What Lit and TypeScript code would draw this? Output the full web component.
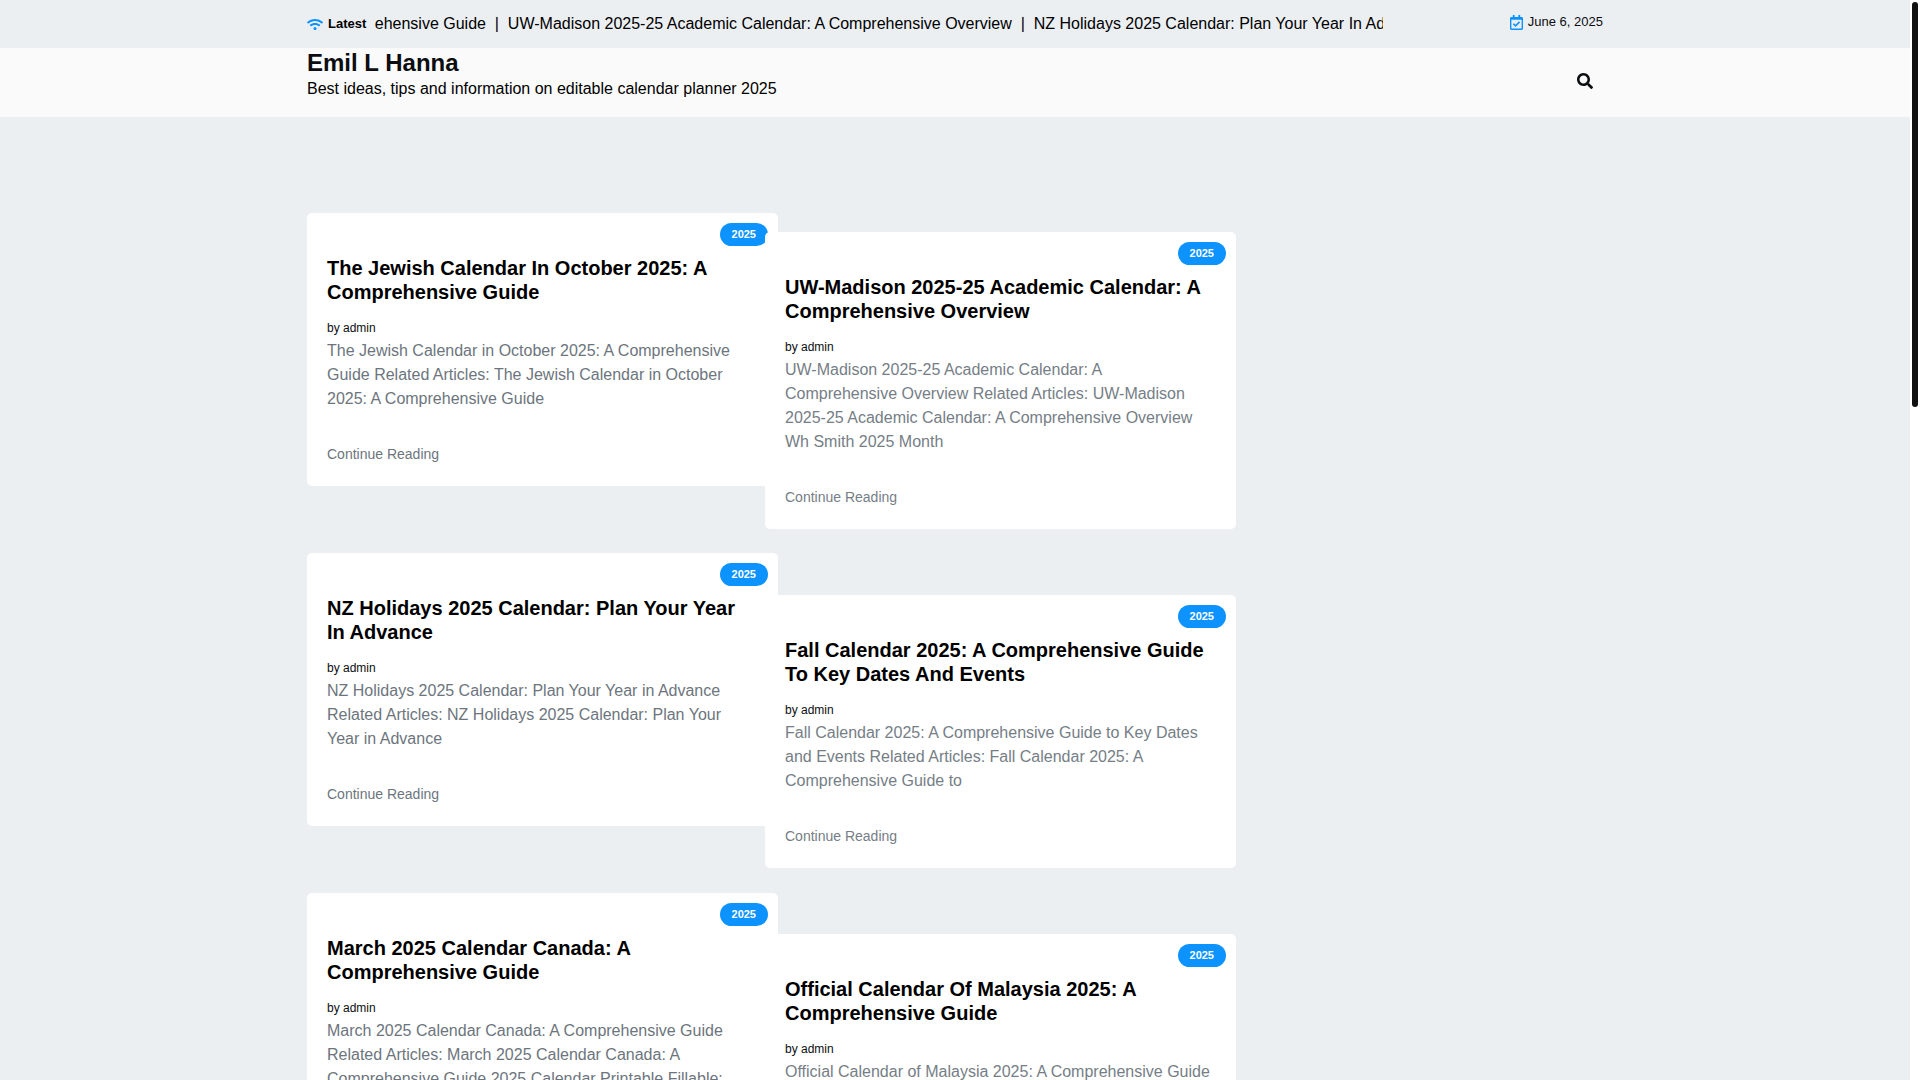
import { LitElement, html, css, svg } from "lit";
import { customElement, property } from "lit/decorators.js";

interface Post {
  title: string;
  excerpt: string;
}

const leftPosts: Post[] = [
  {
    title: "The Jewish Calendar In October 2025: A Comprehensive Guide",
    excerpt:
      "The Jewish Calendar in October 2025: A Comprehensive Guide Related Articles: The Jewish Calendar in October 2025: A Comprehensive Guide",
  },
  {
    title: "NZ Holidays 2025 Calendar: Plan Your Year In Advance",
    excerpt:
      "NZ Holidays 2025 Calendar: Plan Your Year in Advance Related Articles: NZ Holidays 2025 Calendar: Plan Your Year in Advance",
  },
  {
    title: "March 2025 Calendar Canada: A Comprehensive Guide",
    excerpt:
      "March 2025 Calendar Canada: A Comprehensive Guide Related Articles: March 2025 Calendar Canada: A Comprehensive Guide 2025 Calendar Printable Fillable:",
  },
];

const rightPosts: Post[] = [
  {
    title: "UW-Madison 2025-25 Academic Calendar: A Comprehensive Overview",
    excerpt:
      "UW-Madison 2025-25 Academic Calendar: A Comprehensive Overview Related Articles: UW-Madison 2025-25 Academic Calendar: A Comprehensive Overview Wh Smith 2025 Month",
  },
  {
    title: "Fall Calendar 2025: A Comprehensive Guide To Key Dates And Events",
    excerpt:
      "Fall Calendar 2025: A Comprehensive Guide to Key Dates and Events Related Articles: Fall Calendar 2025: A Comprehensive Guide to",
  },
  {
    title: "Official Calendar Of Malaysia 2025: A Comprehensive Guide",
    excerpt: "Official Calendar of Malaysia 2025: A Comprehensive Guide",
  },
];

const headlines = [leftPosts[0].title, rightPosts[0].title, leftPosts[1].title];

const wifiIcon = svg`<path d="M634.91 154.88C457.74-8.99 182.19-8.93 5.09 154.88c-6.66 6.16-6.79 16.59-.35 22.98l34.24 33.97c6.14 6.1 16.02 6.23 22.4.38 145.92-133.68 371.3-133.71 517.25 0 6.38 5.85 16.26 5.71 22.4-.38l34.24-33.97c6.43-6.39 6.3-16.82-.36-22.98zM320 352c-35.35 0-64 28.65-64 64s28.65 64 64 64 64-28.65 64-64-28.65-64-64-64zm202.67-83.59c-115.26-101.93-290.21-101.82-405.34 0-6.9 6.1-7.12 16.69-.57 23.15l34.44 33.99c6 5.92 15.66 6.32 22.05.8 83.95-72.57 209.74-72.41 293.49 0 6.39 5.52 16.05 5.13 22.05-.8l34.44-33.99c6.56-6.46 6.33-17.06-.56-23.15z"/>`;

const calendarIcon = svg`<path d="M400 64h-48V12c0-6.627-5.373-12-12-12h-40c-6.627 0-12 5.373-12 12v52H160V12c0-6.627-5.373-12-12-12h-40c-6.627 0-12 5.373-12 12v52H48C21.49 64 0 85.49 0 112v352c0 26.51 21.49 48 48 48h352c26.51 0 48-21.49 48-48V112c0-26.51-21.49-48-48-48zm-6 400H54a6 6 0 0 1-6-6V160h352v298a6 6 0 0 1-6 6zm-52.849-200.65L198.842 404.519c-4.705 4.667-12.303 4.637-16.971-.068l-75.091-75.699c-4.667-4.705-4.637-12.303.068-16.971l22.719-22.536c4.705-4.667 12.303-4.637 16.97.069l44.104 44.461 111.072-110.181c4.705-4.667 12.303-4.637 16.971.068l22.536 22.718c4.667 4.705 4.636 12.303-.069 16.97z"/>`;

const searchIcon = svg`<path d="M505 442.7L405.3 343c-4.5-4.5-10.6-7-17-7H372c27.6-35.3 44-79.7 44-128C416 93.1 322.9 0 208 0S0 93.1 0 208s93.1 208 208 208c48.3 0 92.7-16.4 128-44v16.3c0 6.4 2.5 12.5 7 17l99.7 99.7c9.4 9.4 24.6 9.4 33.9 0l28.3-28.3c9.4-9.4 9.4-24.6.1-34zM208 336c-70.7 0-128-57.2-128-128 0-70.7 57.2-128 128-128 70.7 0 128 57.2 128 128 0 70.7-57.2 128-128 128z"/>`;

@customElement("post-card")
export class PostCard extends LitElement {
  @property({ attribute: false }) post!: Post;

  static styles = css`
    :host {
      display: block;
    }
    .card {
      position: relative;
      box-sizing: border-box;
      padding: 43px 20px 20px;
      background: #fff;
      border-radius: 5px;
    }
    .badge {
      position: absolute;
      top: 10px;
      right: 10px;
      padding: 0 12px;
      border-radius: 12px;
      background: #0c93ff;
      color: #fff;
      font-size: 11px;
      font-weight: 700;
      line-height: 23px;
      text-decoration: none;
    }
    .title {
      margin: 0 0 15px;
      font-size: 20px;
      font-weight: 700;
      line-height: 24px;
    }
    .title a,
    .meta a {
      color: inherit;
      text-decoration: none;
    }
    .title a {
      color: #000;
    }
    .meta {
      margin: 0 0 2px;
      font-size: 12px;
      line-height: 18px;
      color: #0c0d10;
    }
    .excerpt {
      margin: 0 0 33px;
      padding-right: 4px;
      font-size: 16px;
      line-height: 24px;
      color: var(--excerpt-ink, #6c757d);
    }
    .more {
      display: block;
      width: fit-content;
      padding-bottom: 2px;
      font-size: 14px;
      line-height: 20px;
      color: var(--excerpt-ink, #6c757d);
      text-decoration: none;
    }
  `;

  render() {
    return html`
      <article class="card">
        <a class="badge" href="#2025">2025</a>
        <h2 class="title"><a href="#post">${this.post.title}</a></h2>
        <p class="meta">by <a href="#admin">admin</a></p>
        <p class="excerpt">${this.post.excerpt}</p>
        <a class="more" href="#post">Continue Reading</a>
      </article>
    `;
  }
}

@customElement("app-root")
export class AppRoot extends LitElement {
  static styles = css`
    :host {
      display: block;
      font-family: "Liberation Sans", Arial, sans-serif;
      font-size: 16px;
      line-height: 24px;
      color: #0c0d10;
    }
    .page {
      height: 100vh;
      margin-right: 10px;
      overflow-y: auto;
      scrollbar-width: none;
      background: #ebeff2;
    }
    .rail {
      position: fixed;
      top: 0;
      right: 0;
      bottom: 0;
      width: 10px;
      background: #fff;
    }
    .thumb {
      width: 6px;
      height: 37.5%;
      margin: 2px auto 0;
      border-radius: 3px;
      background: #111;
    }
    .container {
      box-sizing: border-box;
      width: 100%;
      max-width: 1296px;
      margin: 0 auto;
    }
    .topbar {
      display: flex;
      align-items: center;
      height: 48px;
    }
    .icon {
      display: block;
      flex: none;
      fill: #0c93ff;
    }
    .latest {
      display: flex;
      align-items: center;
      gap: 5px;
      flex: none;
      width: 68px;
      font-size: 13px;
      font-weight: 700;
      color: #000;
    }
    .ticker {
      flex: 1;
      min-width: 0;
      margin-right: 127px;
      overflow: hidden;
      white-space: pre;
      color: #000;
    }
    .track {
      margin-left: -340px;
    }
    .track a {
      color: inherit;
      text-decoration: none;
    }
    .date {
      display: flex;
      align-items: center;
      gap: 5px;
      flex: none;
      padding-bottom: 4px;
      font-size: 13px;
    }
    .header {
      background: #fafafa;
    }
    .brandbar {
      display: flex;
      align-items: flex-start;
      justify-content: space-between;
      padding-bottom: 16px;
    }
    .site {
      margin: 0;
      font-size: 24px;
      font-weight: 700;
      line-height: 29px;
    }
    .site a {
      color: inherit;
      text-decoration: none;
    }
    .tagline {
      margin: 0;
      color: #000;
    }
    .search {
      display: block;
      margin: 15px 0 0;
      padding: 10px;
      border: 0;
      background: none;
      cursor: pointer;
    }
    .search svg {
      display: block;
      fill: #0c0d10;
    }
    .layout {
      display: grid;
      grid-template-columns: minmax(0, 1fr) 343px;
      column-gap: 24px;
      padding-top: 96px;
    }
    .posts {
      display: flex;
      align-items: flex-start;
    }
    .column {
      display: flex;
      flex: 1;
      flex-direction: column;
      gap: 67px;
      min-width: 0;
    }
    .column.late {
      --excerpt-ink: #757e86;
      gap: 66px;
      margin-left: -13px;
      padding-top: 19px;
      z-index: 1;
    }
  `;

  render() {
    return html`
      <div class="page">
        <div class="container topbar">
          <div class="latest">
            <svg class="icon" width="16" height="13" viewBox="0 0 640 512" aria-hidden="true">${wifiIcon}</svg>
            <span>Latest</span>
          </div>
          <div class="ticker">
            <div class="track">${headlines.map(
              (h, i) => html`${i ? "\u00a0 | \u00a0" : ""}<a href="#post">${h}</a>`
            )}</div>
          </div>
          <div class="date">
            <svg class="icon" width="13" height="15" viewBox="0 0 448 512" aria-hidden="true">${calendarIcon}</svg>
            <span>June 6, 2025</span>
          </div>
        </div>
        <header class="header">
          <div class="container brandbar">
            <div>
              <h1 class="site"><a href="#home">Emil L Hanna</a></h1>
              <p class="tagline">Best ideas, tips and information on editable calendar planner 2025</p>
            </div>
            <button class="search" type="button" aria-label="Search">
              <svg width="16" height="16" viewBox="0 0 512 512" aria-hidden="true">${searchIcon}</svg>
            </button>
          </div>
        </header>
        <main class="container layout">
          <div class="posts">
            <div class="column">${leftPosts.map((p) => html`<post-card .post=${p}></post-card>`)}</div>
            <div class="column late">${rightPosts.map((p) => html`<post-card .post=${p}></post-card>`)}</div>
          </div>
        </main>
      </div>
      <div class="rail"><div class="thumb"></div></div>
    `;
  }
}
